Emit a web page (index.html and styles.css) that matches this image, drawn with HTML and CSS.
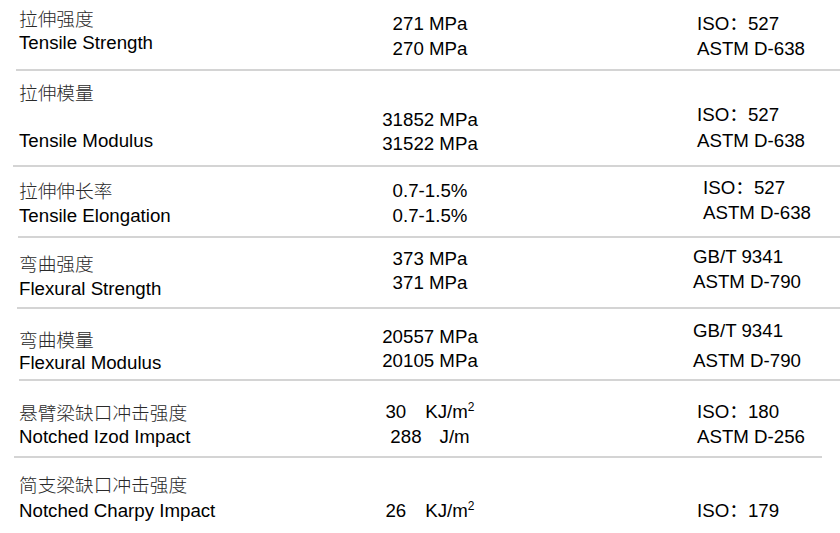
FILE: index.html
```html
<!DOCTYPE html>
<html lang="zh-CN">
<head>
<meta charset="utf-8">
<title>Mechanical properties</title>
<link rel="stylesheet" href="styles.css">
</head>
<body>
<div class="table">
  <div class="row r1">
    <div class="cells">
      <div class="c1"><div class="zh">拉伸强度</div><div class="en">Tensile Strength</div></div>
      <div class="c2"><div>271 MPa</div><div>270 MPa</div></div>
      <div class="c3"><div>ISO<span class="zh">：</span>527</div><div>ASTM D-638</div></div>
    </div>
    <div class="rule"></div>
  </div>
  <div class="row r2">
    <div class="cells">
      <div class="c1"><div class="zh">拉伸模量</div><div class="en">Tensile Modulus</div></div>
      <div class="c2"><div>31852 MPa</div><div>31522 MPa</div></div>
      <div class="c3"><div>ISO<span class="zh">：</span>527</div><div class="l2">ASTM D-638</div></div>
    </div>
    <div class="rule"></div>
  </div>
  <div class="row r3">
    <div class="cells">
      <div class="c1"><div class="zh">拉伸伸长率</div><div class="en">Tensile Elongation</div></div>
      <div class="c2"><div>0.7-1.5%</div><div>0.7-1.5%</div></div>
      <div class="c3"><div>ISO<span class="zh">：</span>527</div><div>ASTM D-638</div></div>
    </div>
    <div class="rule"></div>
  </div>
  <div class="row r4">
    <div class="cells">
      <div class="c1"><div class="zh">弯曲强度</div><div class="en">Flexural Strength</div></div>
      <div class="c2"><div>373 MPa</div><div class="l2">371 MPa</div></div>
      <div class="c3"><div>GB/T 9341</div><div>ASTM D-790</div></div>
    </div>
    <div class="rule"></div>
  </div>
  <div class="row r5">
    <div class="cells">
      <div class="c1"><div class="zh">弯曲模量</div><div class="en">Flexural Modulus</div></div>
      <div class="c2"><div>20557 MPa</div><div class="l2">20105 MPa</div></div>
      <div class="c3"><div>GB/T 9341</div><div class="l2">ASTM D-790</div></div>
    </div>
    <div class="rule"></div>
  </div>
  <div class="row r6">
    <div class="cells">
      <div class="c1"><div class="zh">悬臂梁缺口冲击强度</div><div class="en">Notched Izod Impact</div></div>
      <div class="c2"><div>30<span class="unit">KJ/m<sup>2</sup></span></div><div>288<span class="unit u2">J/m</span></div></div>
      <div class="c3"><div>ISO<span class="zh">：</span>180</div><div>ASTM D-256</div></div>
    </div>
    <div class="rule"></div>
  </div>
  <div class="row r7">
    <div class="cells">
      <div class="c1"><div class="zh">简支梁缺口冲击强度</div><div class="en">Notched Charpy Impact</div></div>
      <div class="c2"><div>26<span class="unit">KJ/m<sup>2</sup></span></div></div>
      <div class="c3"><div>ISO<span class="zh">：</span>179</div></div>
    </div>
  </div>
</div>
</body>
</html>
```
FILE: styles.css
```css
* { box-sizing: border-box; }
html, body { margin: 0; padding: 0; background: #fff; }
body {
  font-family: "Liberation Sans", "Noto Sans CJK SC", sans-serif;
  font-size: 18.7px;
  line-height: 25px;
  color: #000;
  width: 840px;
  height: 533px;
  overflow: hidden;
}
.table { display: flex; flex-direction: column; }
.row { display: flex; flex-direction: column; }
.cells {
  flex: 1;
  display: grid;
  grid-template-columns: 370px 120px 1fr;
}
.c1 { padding-left: 19px; }
.c2 { text-align: center; white-space: nowrap; }
.c3 { padding-left: 207px; white-space: nowrap; }
.zh {
  font-family: "Noto Sans CJK SC", sans-serif;
  font-weight: 300;
  color: #2a2a2a;
}
.c3 .zh { color: #000; font-weight: 400; line-height: 1; }
.rule { height: 2px; background: #d4d4d4; margin-left: 16px; }
.unit { margin-left: 19px; }
.unit.u2 { margin-left: 18px; }
sup { font-size: 12px; line-height: 0; vertical-align: 7px; }

.r1 { height: 71px; }
.r1 .c1 { padding-top: 5px; }
.r1 .c1 .en { margin-top: 0; }
.r1 .c2 { padding-top: 11px; }
.r1 .c3 { padding-top: 11px; }

.r2 { height: 96px; }
.r2 .rule { margin-left: 13px; }
.r2 .c1 { padding-top: 8px; }
.r2 .c1 .en { margin-top: 24px; }
.r2 .c2 { padding-top: 36px; }
.r2 .c2 div + div { margin-top: -1px; }
.r2 .c3 { padding-top: 31px; }
.r2 .c3 .l2 { margin-top: 1px; }

.r3 { height: 71px; }
.r3 .rule { margin-left: 18px; }
.r3 .c1 { padding-top: 10px; }
.r3 .c1 .en { margin-top: 1px; }
.r3 .c2 { padding-top: 11px; }
.r3 .c3 { padding-top: 8px; padding-left: 213px; }

.r4 { height: 71px; }
.r4 .rule { margin-left: 17px; }
.r4 .c1 { padding-top: 12px; }
.r4 .c1 .en { margin-top: 1px; }
.r4 .c2 { padding-top: 8px; }
.r4 .c2 .l2 { margin-top: -1px; }
.r4 .c3 { padding-top: 6px; padding-left: 203px; }

.r5 { height: 72px; }
.r5 .rule { margin-left: 19px; }
.r5 .c1 { padding-top: 17px; }
.r5 .c1 .en { margin-top: -1px; }
.r5 .c2 { padding-top: 15px; }
.r5 .c2 .l2 { margin-top: -1px; }
.r5 .c3 { padding-top: 9px; padding-left: 203px; }
.r5 .c3 .l2 { margin-top: 5px; }

.r6 { height: 77px; }
.r6 .rule { margin-left: 14px; margin-right: 18px; }
.r6 .c1 { padding-top: 18px; }
.r6 .c1 .en { margin-top: 0; }
.r6 .c2 { padding-top: 18px; }
.r6 .c3 { padding-top: 18px; }

.r7 { height: 75px; }
.r7 .c1 { padding-top: 13px; }
.r7 .c1 .en { margin-top: 2px; }
.r7 .c2 { padding-top: 40px; }
.r7 .c3 { padding-top: 40px; }
```
